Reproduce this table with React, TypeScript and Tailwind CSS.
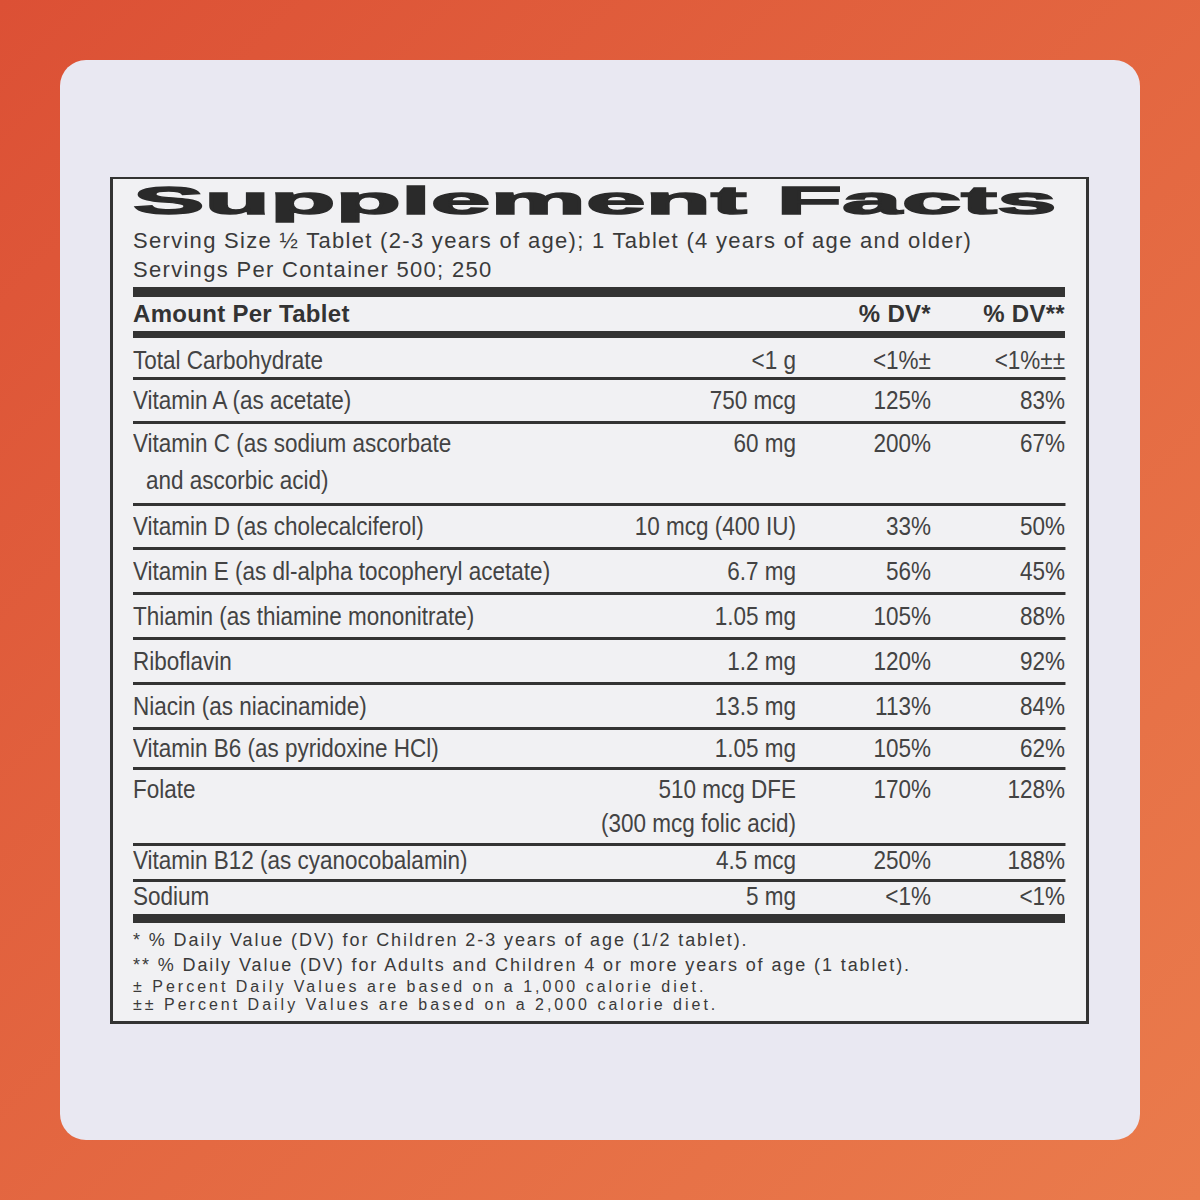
interface Row {
  name: string[];
  amount: string[];
  dv1: string;
  dv2: string;
  cls: string;
}

const rows: Row[] = [
  { name: ['Total Carbohydrate'], amount: ['<1 g'], dv1: '<1%±', dv2: '<1%±±', cls: 'h-[42px] pt-[6px] items-center border-b-[3px]' },
  { name: ['Vitamin A (as acetate)'], amount: ['750 mcg'], dv1: '125%', dv2: '83%', cls: 'h-[44px] items-center border-b-[3px]' },
  { name: ['Vitamin C (as sodium ascorbate', 'and ascorbic acid)'], amount: ['60 mg'], dv1: '200%', dv2: '67%', cls: 'h-[82px] pt-[1px] items-start leading-[37px] border-b-[3px]' },
  { name: ['Vitamin D (as cholecalciferol)'], amount: ['10 mcg (400 IU)'], dv1: '33%', dv2: '50%', cls: 'h-[44px] items-center border-b-[3px]' },
  { name: ['Vitamin E (as dl-alpha tocopheryl acetate)'], amount: ['6.7 mg'], dv1: '56%', dv2: '45%', cls: 'h-[45px] items-center border-b-[3px]' },
  { name: ['Thiamin (as thiamine mononitrate)'], amount: ['1.05 mg'], dv1: '105%', dv2: '88%', cls: 'h-[45px] items-center border-b-[3px]' },
  { name: ['Riboflavin'], amount: ['1.2 mg'], dv1: '120%', dv2: '92%', cls: 'h-[45px] items-center border-b-[3px]' },
  { name: ['Niacin (as niacinamide)'], amount: ['13.5 mg'], dv1: '113%', dv2: '84%', cls: 'h-[45px] items-center border-b-[3px]' },
  { name: ['Vitamin B6 (as pyridoxine HCl)'], amount: ['1.05 mg'], dv1: '105%', dv2: '62%', cls: 'h-[40px] items-center border-b-[3px]' },
  { name: ['Folate'], amount: ['510 mcg DFE', '(300 mcg folic acid)'], dv1: '170%', dv2: '128%', cls: 'h-[76px] pt-[2px] items-start leading-[34px] border-b-[3px]' },
  { name: ['Vitamin B12 (as cyanocobalamin)'], amount: ['4.5 mcg'], dv1: '250%', dv2: '188%', cls: 'h-[36px] pb-[4px] items-center border-b-[3px]' },
  { name: ['Sodium'], amount: ['5 mg'], dv1: '<1%', dv2: '<1%', cls: 'h-[32px] pb-[3px] items-center' },
];

export default function App() {
  return (
    <div className="w-[1200px] h-[1200px] p-[60px] bg-linear-to-br from-[#DC5035] to-[#EA7B4C]">
      <div className="h-full rounded-[26px] bg-[#E9E8F2] pt-[117px] pl-[50px]">
        <div className="w-[979px] h-[847px] border-[3px] border-t-2 border-[#333] bg-[#F1F1F3] pl-[20px] pr-[21px] text-[#3a3a3a] font-['Liberation_Sans',Arial,sans-serif] overflow-hidden">
          {/* title */}
          <div className="h-[43px] pt-[2px] text-[39px] leading-[39px] font-bold text-[#2a2a2a] whitespace-nowrap">
            <span className="inline-block origin-left scale-x-[2.75] [-webkit-text-stroke:1.4px_#2a2a2a]">Supplement Facts</span>
          </div>
          <div className="mt-[4px] text-[22px] leading-[29px] tracking-[1.3px] whitespace-nowrap">
            <p>Serving Size ½ Tablet (2-3 years of age); 1 Tablet (4 years of age and older)</p>
            <p>Servings Per Container 500; 250</p>
          </div>
          <div className="mt-[3px] h-[10px] bg-[#333]"></div>
          <div className="h-[34px] flex items-center font-bold text-[24px] tracking-[0.3px] text-[#333]">
            <span className="flex-1">Amount Per Tablet</span>
            <span className="w-[135px] text-right">% DV*</span>
            <span className="w-[134px] text-right">% DV**</span>
          </div>
          <div className="h-[7px] bg-[#333]"></div>
          {/* rows: condensed by horizontal scale */}
          <div className="w-[1077.5px] origin-left scale-x-[0.865] text-[26px] text-[#434343]">
            {rows.map((r) => (
              <div key={r.name[0]} className={`flex border-[#333] ${r.cls}`}>
                <div className="flex-1 min-w-0 whitespace-nowrap">
                  {r.name.map((n, i) => (
                    <p key={n} className={i > 0 ? 'pl-[15px]' : ''}>{n}</p>
                  ))}
                </div>
                <div className="text-right whitespace-nowrap">
                  {r.amount.map((a) => (
                    <p key={a}>{a}</p>
                  ))}
                </div>
                <div className="w-[156px] text-right">{r.dv1}</div>
                <div className="w-[155px] text-right">{r.dv2}</div>
              </div>
            ))}
          </div>
          <div className="h-[9px] bg-[#333]"></div>
          {/* footnotes */}
          <div className="mt-[5px] text-[18px] leading-[25px] tracking-[1.9px] whitespace-nowrap">
            <p>* % Daily Value (DV) for Children 2-3 years of age (1/2 tablet).</p>
            <p>** % Daily Value (DV) for Adults and Children 4 or more years of age (1 tablet).</p>
          </div>
          <div className="text-[16px] leading-[18px] tracking-[3px] whitespace-nowrap">
            <p>± Percent Daily Values are based on a 1,000 calorie diet.</p>
            <p>±± Percent Daily Values are based on a 2,000 calorie diet.</p>
          </div>
        </div>
      </div>
    </div>
  );
}
